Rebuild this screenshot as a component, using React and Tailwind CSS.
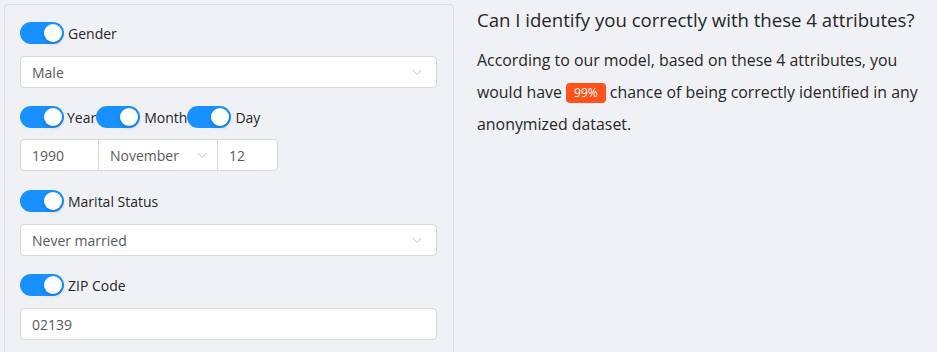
import React from "react";

function Switch() {
  return (
    <span className="relative inline-block h-[22px] w-[44px] shrink-0 rounded-full bg-[#1890ff]">
      <span className="absolute left-[24px] top-[2px] h-[18px] w-[18px] rounded-full bg-white shadow-[0_2px_4px_0_rgba(0,35,11,0.2)]" />
    </span>
  );
}

function Chevron() {
  return (
    <svg width="12" height="12" viewBox="0 0 12 12" className="shrink-0">
      <path d="M1.5 4 L6 8.5 L10.5 4" fill="none" stroke="#bfbfbf" strokeWidth="1" />
    </svg>
  );
}

function ToggleLabel({ children }) {
  return (
    <div className="flex h-[22px] items-center">
      <Switch />
      <span className="ml-[4px] text-[14px] text-[#262626]">{children}</span>
    </div>
  );
}

function Select({ value }) {
  return (
    <div className="flex h-[32px] w-full items-center justify-between rounded-[4px] border border-[#d9d9d9] bg-white pl-[11px] pr-[13px] text-[14px] text-[#595959]">
      <span>{value}</span>
      <Chevron />
    </div>
  );
}

export default function App() {
  return (
    <div
      className="flex h-[352px] w-[937px] overflow-hidden bg-[#f0f1f5] pl-[4px] pt-[4px]"
      style={{ fontFamily: '"Open Sans", "Noto Sans", sans-serif' }}
    >
      <div className="flex h-[400px] w-[450px] shrink-0 flex-col rounded-[4px] border border-[#dcdee3] bg-[#f0f1f5] pl-[15px] pr-[16px] pt-[17px]">
        <ToggleLabel>Gender</ToggleLabel>
        <div className="mt-[12px]">
          <Select value="Male" />
        </div>

        <div className="mt-[18px] flex h-[22px] items-center text-[14px] text-[#262626]">
          <Switch />
          <span className="ml-[3px]">Year</span>
          <Switch />
          <span className="ml-[4px]">Month</span>
          <Switch />
          <span className="ml-[4px]">Day</span>
        </div>
        <div className="mt-[11px] flex h-[32px] w-[258px] rounded-[4px] border border-[#d9d9d9] bg-white text-[14px] text-[#595959]">
          <div className="flex w-[78px] items-center border-r border-[#d9d9d9] pl-[11px]">1990</div>
          <div className="flex w-[119px] items-center justify-between border-r border-[#d9d9d9] pl-[11px] pr-[9px]">
            <span>November</span>
            <Chevron />
          </div>
          <div className="flex flex-1 items-center pl-[11px]">12</div>
        </div>

        <div className="mt-[19px]">
          <ToggleLabel>Marital Status</ToggleLabel>
        </div>
        <div className="mt-[12px]">
          <Select value="Never married" />
        </div>

        <div className="mt-[18px]">
          <ToggleLabel>ZIP Code</ToggleLabel>
        </div>
        <div className="mt-[12px] flex h-[32px] w-full items-center rounded-[4px] border border-[#d9d9d9] bg-white pl-[11px] text-[14px] text-[#595959]">
          02139
        </div>
      </div>

      <div className="ml-[23px] flex-1 pr-[6px]">
        <h2 className="mt-[0px] text-[18.6px] leading-[32px] text-[#262626]">
          Can I identify you correctly with these 4 attributes?
        </h2>
        <p className="mt-[8px] text-[15.9px] leading-[32px] text-[#262626]">
          According to our model, based on these 4 attributes, you would have{" "}
          <span className="inline-block rounded-[4px] bg-[#fa541c] px-[8px] text-[12px] leading-[20px] text-white align-[1px]">
            99%
          </span>{" "}
          chance of being correctly identified in any anonymized dataset.
        </p>
      </div>
    </div>
  );
}
